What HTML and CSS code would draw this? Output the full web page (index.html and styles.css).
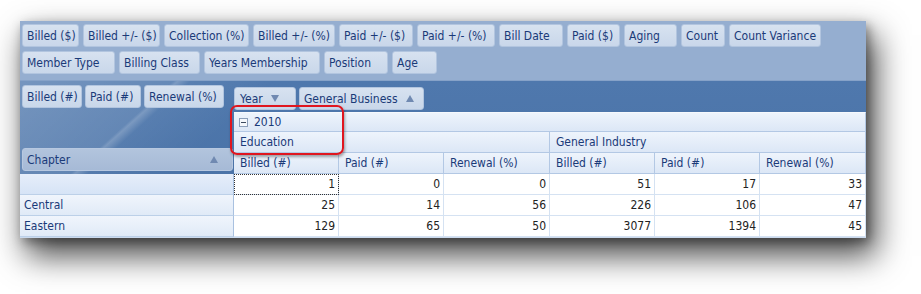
FILE: index.html
```html
<!DOCTYPE html>
<html>
    <head>
        <title>Membership pivot</title>
        <link rel="stylesheet" href="styles.css">
    </head>
    <body>

        <div class="page">
        <div class="pivot">
            <div class="filters">
                <div class="chips row-a">
                    <span class="chip">Billed ($)</span>
                    <span class="chip">Billed +/- ($)</span>
                    <span class="chip">Collection (%)</span>
                    <span class="chip">Billed +/- (%)</span>
                    <span class="chip">Paid +/- ($)</span>
                    <span class="chip">Paid +/- (%)</span>
                    <span class="chip">Bill Date</span>
                    <span class="chip">Paid ($)</span>
                    <span class="chip">Aging</span>
                    <span class="chip">Count</span>
                    <span class="chip">Count Variance</span>
                </div>
                <div class="chips row-b">
                    <span class="chip">Member Type</span>
                    <span class="chip">Billing Class</span>
                    <span class="chip">Years Membership</span>
                    <span class="chip">Position</span>
                    <span class="chip">Age</span>
                </div>
            </div>

            <div class="grid">
                <div class="chips data-fields">
                    <span class="chip">Billed (#)</span>
                    <span class="chip">Paid (#)</span>
                    <span class="chip">Renewal (%)</span>
                </div>
                <div class="chips col-fields">
                    <span class="chip">Year<i class="down"></i></span>
                    <span class="chip">General Business<i class="up"></i></span>
                </div>
                <div class="corner">
                    <span class="chip">Chapter<i class="up"></i></span>
                </div>

                <div class="hdr year">
                    <svg class="collapse" width="9" height="9" viewBox="0 0 9 9">
                        <rect x="0.5" y="0.5" width="8" height="8" fill="#f4f7fb" stroke="#8c9fba"/>
                        <path d="M2 4.5h5" stroke="#3c4a5e"/>
                    </svg>
                    2010
                </div>
                <div class="hdr group">Education</div>
                <div class="hdr group">General Industry</div>
                <div class="hdr measure">Billed (#)</div>
                <div class="hdr measure">Paid (#)</div>
                <div class="hdr measure">Renewal (%)</div>
                <div class="hdr measure">Billed (#)</div>
                <div class="hdr measure">Paid (#)</div>
                <div class="hdr measure">Renewal (%)</div>

                <div class="rowhdr current"></div>
                <div class="cell focus">1</div>
                <div class="cell">0</div>
                <div class="cell">0</div>
                <div class="cell">51</div>
                <div class="cell">17</div>
                <div class="cell">33</div>

                <div class="rowhdr">Central</div>
                <div class="cell">25</div>
                <div class="cell">14</div>
                <div class="cell">56</div>
                <div class="cell">226</div>
                <div class="cell">106</div>
                <div class="cell">47</div>

                <div class="rowhdr">Eastern</div>
                <div class="cell">129</div>
                <div class="cell">65</div>
                <div class="cell">50</div>
                <div class="cell">3077</div>
                <div class="cell">1394</div>
                <div class="cell">45</div>
            </div>

            <div class="callout"></div>
        </div>
        </div>

    </body>
</html>
```

FILE: styles.css
```css
body {
    margin: 0;
    background: #fff;
    color: #1a3a78;
    font-family: "DejaVu Sans Condensed", "DejaVu Sans", sans-serif;
    font-stretch: condensed;
    font-size: 12px;
}

.page {
    min-height: 294px;
    padding: 21px 0 0 20px;
    box-sizing: border-box;
}

.pivot {
    position: relative;
    width: 846px;
    background: #fff;
    box-shadow: 8px 16px 30px 2px rgba(0,0,0,.7), 3px 4px 10px rgba(0,0,0,.35);
}

/* filter area */
.filters {
    padding: 3px 2px 6px;
    background: #95aed0;
    border-bottom: 1px solid #86a2c8;
}
.chips {
    display: flex;
    gap: 4px;
}
.chips + .chips {
    margin-top: 4px;
}
.chip {
    display: flex;
    align-items: center;
    box-sizing: border-box;
    height: 23px;
    padding: 0 4px;
    border: 1px solid #b2c5df;
    border-radius: 3px;
    background: linear-gradient(#d7e2f0, #c9d7ea);
    white-space: nowrap;
    overflow: hidden;
}
.chip i {
    width: 0;
    height: 0;
    margin-left: 8px;
    border-left: 4px solid transparent;
    border-right: 4px solid transparent;
}
.chip i.down {
    border-top: 7px solid #7089b1;
}
.chip i.up {
    border-bottom: 7px solid #7089b1;
}

.row-a .chip:nth-child(1) { width: 57px; }
.row-a .chip:nth-child(2) { width: 77px; }
.row-a .chip:nth-child(3) { width: 85px; }
.row-a .chip:nth-child(4) { width: 82px; }
.row-a .chip:nth-child(5) { width: 74px; }
.row-a .chip:nth-child(6) { width: 78px; }
.row-a .chip:nth-child(7) { width: 64px; }
.row-a .chip:nth-child(8) { width: 53px; }
.row-a .chip:nth-child(9) { width: 53px; }
.row-a .chip:nth-child(10) { width: 44px; }
.row-a .chip:nth-child(11) { width: 92px; }

.row-b .chip:nth-child(1) { width: 93px; }
.row-b .chip:nth-child(2) { width: 81px; }
.row-b .chip:nth-child(3) { width: 116px; }
.row-b .chip:nth-child(4) { width: 64px; }
.row-b .chip:nth-child(5) { width: 45px; }

/* pivot body */
.grid {
    display: grid;
    grid-template-columns: 214px 105px 105px 106px 105px 105px 106px;
    grid-template-rows: 31px 20px 21px 21px 21px 21px 21px;
    border-bottom: 1px solid #cbdaee;
    background:
        linear-gradient(138deg, rgba(255,255,255,.22) 0, rgba(255,255,255,.13) 36%, rgba(255,255,255,.26) 37%, rgba(255,255,255,.06) 40%, transparent 60%) 0 0 / 260px 150px no-repeat,
        linear-gradient(#4f78ad, #4870a4);
}
.data-fields {
    grid-row: 1;
    grid-column: 1;
    align-self: center;
    gap: 3px;
    padding-left: 2px;
}
.data-fields .chip:nth-child(1) { width: 60px; }
.data-fields .chip:nth-child(2) { width: 56px; }
.data-fields .chip:nth-child(3) { width: 80px; }

.col-fields {
    grid-row: 1;
    grid-column: 2 / 8;
    align-self: center;
    gap: 3px;
}
.col-fields .chip:nth-child(1) { width: 62px; padding-left: 5px; }
.col-fields .chip:nth-child(2) { width: 125px; }

.corner {
    grid-row: 2 / 5;
    grid-column: 1;
    display: flex;
    align-items: flex-end;
    padding: 0 1px 3px 2px;
}
.corner .chip {
    flex: 1;
    justify-content: space-between;
    padding-right: 14px;
    border-color: #b7c8e0;
    background: linear-gradient(#b2c4dd, #a6bad6);
}

.hdr {
    display: flex;
    align-items: center;
    padding-left: 6px;
    background: linear-gradient(#eef4fc, #dce7f6);
    border-right: 1px solid #b3c8e4;
    border-bottom: 1px solid #b3c8e4;
    white-space: nowrap;
}
.year {
    grid-row: 2;
    grid-column: 2 / 8;
    padding-left: 5px;
    border-top: 1px solid #f6f9fd;
}
.collapse {
    margin-right: 6px;
}
.group {
    grid-row: 3;
    grid-column: span 3;
}
.measure {
    grid-row: 4;
}

.rowhdr {
    display: flex;
    align-items: center;
    padding-left: 4px;
    background: linear-gradient(#f0f5fc, #e0eaf7);
    border-right: 1px solid #a9c1e0;
    border-bottom: 1px solid #bcd0e8;
}
.rowhdr.current {
    background: linear-gradient(#e6eefa, #d6e4f6);
}
.cell {
    display: flex;
    align-items: center;
    justify-content: flex-end;
    padding-right: 3px;
    background: #fff;
    border-right: 1px solid #d5e2f2;
    border-bottom: 1px solid #d5e2f2;
    color: #222;
}
.focus {
    outline: 1px dotted #333;
    outline-offset: -1px;
}

/* annotation */
.callout {
    position: absolute;
    left: 210px;
    top: 84px;
    width: 114px;
    height: 50px;
    box-sizing: border-box;
    border: 2px solid #e0161f;
    border-radius: 7px;
    box-shadow: 1px 2px 3px rgba(0,0,0,.35);
}
```
